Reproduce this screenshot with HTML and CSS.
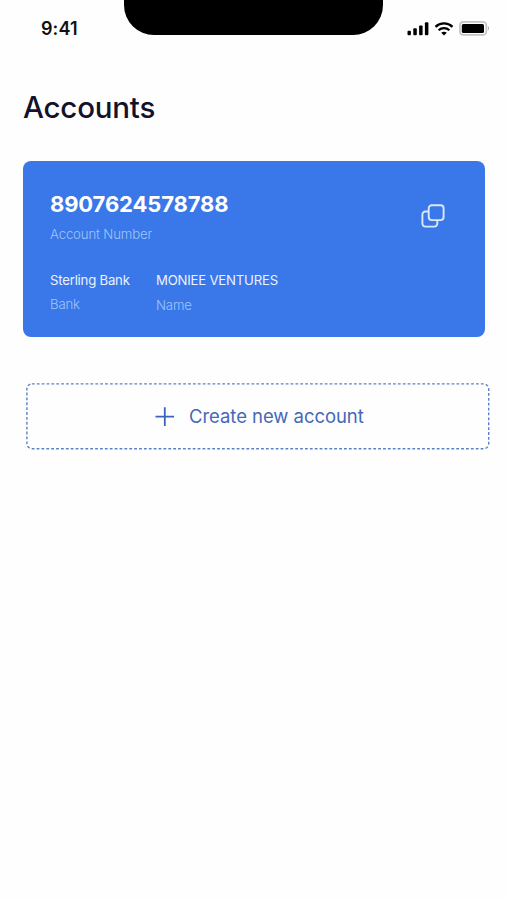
FILE: index.html
```html
<!DOCTYPE html>
<html lang="en">
<head>
  <meta charset="utf-8">
  <meta name="viewport" content="width=device-width, initial-scale=1.0">
  <title>Accounts</title>
  <link rel="stylesheet" href="styles.css">
</head>

<body>

  <header class="status">
    <div class="time">9:41</div>
    <div class="notch"></div>
    <div class="icons">
      <svg width="22" height="14" viewBox="0 0 22 14">
        <rect x="0.5" y="8.8" width="3.4" height="4.4" rx="1"/>
        <rect x="6.3" y="6.2" width="3.5" height="7" rx="1"/>
        <rect x="12.1" y="3.4" width="3.5" height="9.8" rx="1"/>
        <rect x="17.9" y="0.3" width="3.5" height="12.9" rx="1"/>
      </svg>
      <svg class="wifi" width="20" height="14" viewBox="0 0 20 14">
        <path d="M1.5 4.9C6.3 0.3 13.7 0.3 18.5 4.9" fill="none" stroke="#000" stroke-width="2.3"/>
        <path d="M4.6 8.3C7.7 5.4 12.3 5.4 15.4 8.3" fill="none" stroke="#000" stroke-width="2.2"/>
        <path d="M7.2 10.7C8.8 9.3 11.2 9.3 12.8 10.7L10 13.5Z"/>
      </svg>
      <svg class="battery" width="31" height="15" viewBox="0 0 31 15">
        <rect x="0.9" y="0.9" width="26.4" height="13" rx="3.4" fill="none" stroke="#c4c4c4" stroke-width="1.7"/>
        <rect x="2.8" y="2.9" width="22.2" height="9" rx="1.5"/>
        <path d="M28.9 5.3C30.5 6 30.5 8.8 28.9 9.5Z" fill="#b0b0b0"/>
      </svg>
    </div>
  </header>

  <main>
    <h1>Accounts</h1>

    <section class="card">
      <div class="top">
        <div>
          <div class="number">8907624578788</div>
          <div class="label">Account Number</div>
        </div>
        <svg class="copy" width="24" height="24" viewBox="0 0 24 24">
          <rect x="7.7" y="1.2" width="14.9" height="14.9" rx="3"/>
          <path d="M7.7 7.5H4.4A3 3 0 0 0 1.4 10.5V19.6A3 3 0 0 0 4.4 22.6H13.3A3 3 0 0 0 16.3 19.6V16.1"/>
        </svg>
      </div>
      <div class="details">
        <div class="bank">
          <div class="value">Sterling Bank</div>
          <div class="label">Bank</div>
        </div>
        <div class="name">
          <div class="value">MONIEE VENTURES</div>
          <div class="label">Name</div>
        </div>
      </div>
    </section>

    <div class="create">
      <svg class="outline" width="464" height="67" viewBox="0 0 464 67">
        <rect x="0.9" y="0.9" width="461.8" height="64.8" rx="5"/>
      </svg>
      <svg class="plus" width="20" height="20" viewBox="0 0 20 20">
        <path d="M9.8 0.3V18.9M0.5 9.6H19.1"/>
      </svg>
      <span class="create-text">Create new account</span>
    </div>
  </main>

</body>

</html>
```

FILE: styles.css
```css
*{
  box-sizing:border-box;
}

body{
  margin:0;
  background-color:#fefefe;
  font-family:Inter, sans-serif;
}

svg{
  display:block;
}

.status{
  display:flex;
  height:58px;
}

.time{
  width:123.5px;
  padding:18px 0 0 41px;
  font-size:18px;
  line-height:22px;
  font-weight:600;
  letter-spacing:0.1px;
  color:#111;
}

.notch{
  width:259.5px;
  height:35px;
  background-color:black;
  border-radius:0 0 30px 30px;
}

.icons{
  display:flex;
  padding:22px 0 0 24px;
}

.wifi{
  margin-left:5px;
}

.battery{
  margin:-1px 0 0 5px;
}

main{
  padding:0 17px 0 23px;
}

h1{
  margin:29px 0 0;
  font-size:29.5px;
  line-height:40px;
  font-weight:500;
  letter-spacing:-0.2px;
  color:#12122a;
}

.card{
  width:462px;
  height:176px;
  margin-top:34px;
  padding:29px 40px 0 27px;
  border-radius:8px;
  background-color:#3a77e8;
  color:white;
}

.top{
  display:flex;
  justify-content:space-between;
}

.number{
  font-size:22px;
  line-height:28px;
  font-weight:700;
  letter-spacing:-0.13px;
}

.label{
  font-size:13.2px;
  line-height:18px;
  font-weight:300;
  letter-spacing:-0.15px;
  color:#9cc6fb;
}

.number + .label{
  margin-top:7px;
}

.copy{
  margin-top:14px;
  fill:none;
  stroke:#dbe8fc;
  stroke-width:1.9;
}

.details{
  display:flex;
  margin-top:28px;
}

.bank{
  width:106px;
}

.value{
  margin-bottom:6px;
  font-size:13.2px;
  line-height:18px;
  letter-spacing:-0.22px;
  color:#eaf2ff;
}

.name .value{
  margin-bottom:7px;
}

.create{
  position:relative;
  display:flex;
  align-items:center;
  width:464px;
  height:67px;
  margin:46px 0 0 3px;
  padding-left:129px;
}

.outline{
  position:absolute;
  top:0;
  left:0;
  fill:none;
  stroke:#5c80c8;
  stroke-width:1.4;
  stroke-dasharray:2.8 2.08;
}

.plus{
  stroke:#3c63bc;
  stroke-width:1.8;
}

.create-text{
  margin-left:14px;
  padding-bottom:2px;
  font-size:18.5px;
  letter-spacing:-0.05px;
  color:#4468b8;
}
```
